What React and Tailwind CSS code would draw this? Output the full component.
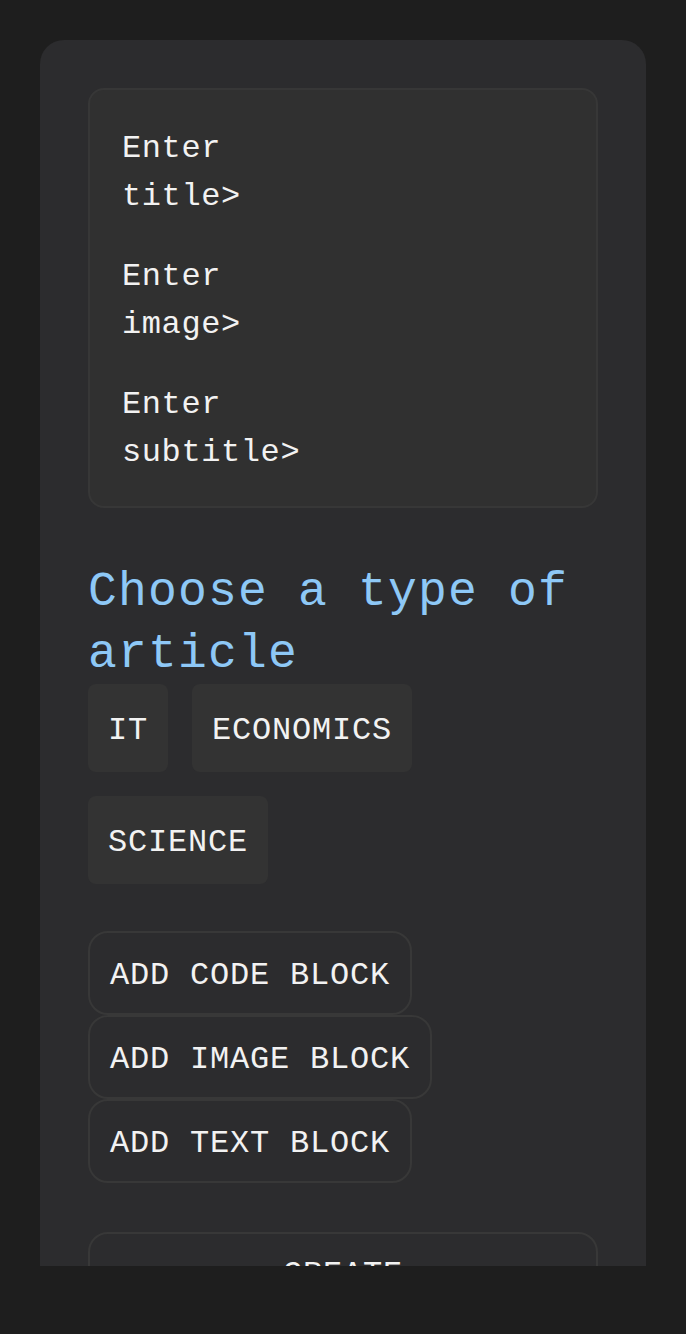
const FIELDS = ['title', 'image', 'subtitle']
const TYPES = ['IT', 'ECONOMICS', 'SCIENCE']
const BLOCKS = ['ADD CODE BLOCK', 'ADD IMAGE BLOCK', 'ADD TEXT BLOCK']

const mono = { fontFamily: '"Liberation Mono", "DejaVu Sans Mono", monospace' }

export default function App() {
  return (
    <div className="min-h-screen bg-[#1e1e1e] pt-10 px-10" style={mono}>
      <div className="h-[1226px] overflow-hidden rounded-t-[24px] bg-[#2c2c2e] p-12">
        {/* header fields */}
        <div className="flex flex-col gap-8 rounded-2xl border-2 border-[#373737] bg-[#303030] px-[32px] pt-[35px] pb-[29px] text-[32px] leading-[48px] tracking-[0.6px] text-[#f2f2f2]">
          {FIELDS.map((f) => (
            <div key={f}>
              <div>Enter</div>
              <div>{f}&gt;</div>
            </div>
          ))}
        </div>

        <h2 className="mt-[51px] pt-[2px] h-[125px] text-[48px] leading-[62px] tracking-[1.2px] text-[#8ec8f6]">
          Choose a type of
          <br />
          article
        </h2>

        <div className="flex flex-wrap gap-6 w-[400px]">
          {TYPES.map((t) => (
            <div key={t} className="rounded-lg bg-[#333333] px-5 pt-[23px] pb-[17px] text-[32px] leading-[48px] tracking-[0.8px] text-[#f2f2f2]">
              {t}
            </div>
          ))}
        </div>

        <div className="mt-[47px] flex flex-col items-start">
          {BLOCKS.map((b) => (
            <button key={b} className="rounded-[20px] border-2 border-[#383838] bg-[#2c2c2e] px-5 pt-[19px] pb-[13px] text-[32px] leading-[48px] tracking-[0.8px] text-[#f2f2f2]">
              {b}
            </button>
          ))}
        </div>

        <button className="mt-[49px] w-full rounded-[20px] border-2 border-[#383838] bg-[#2c2c2e] px-5 pt-[17px] pb-[15px] text-[32px] leading-[48px] tracking-[0.8px] text-[#f2f2f2]">
          CREATE
        </button>
      </div>
    </div>
  )
}
